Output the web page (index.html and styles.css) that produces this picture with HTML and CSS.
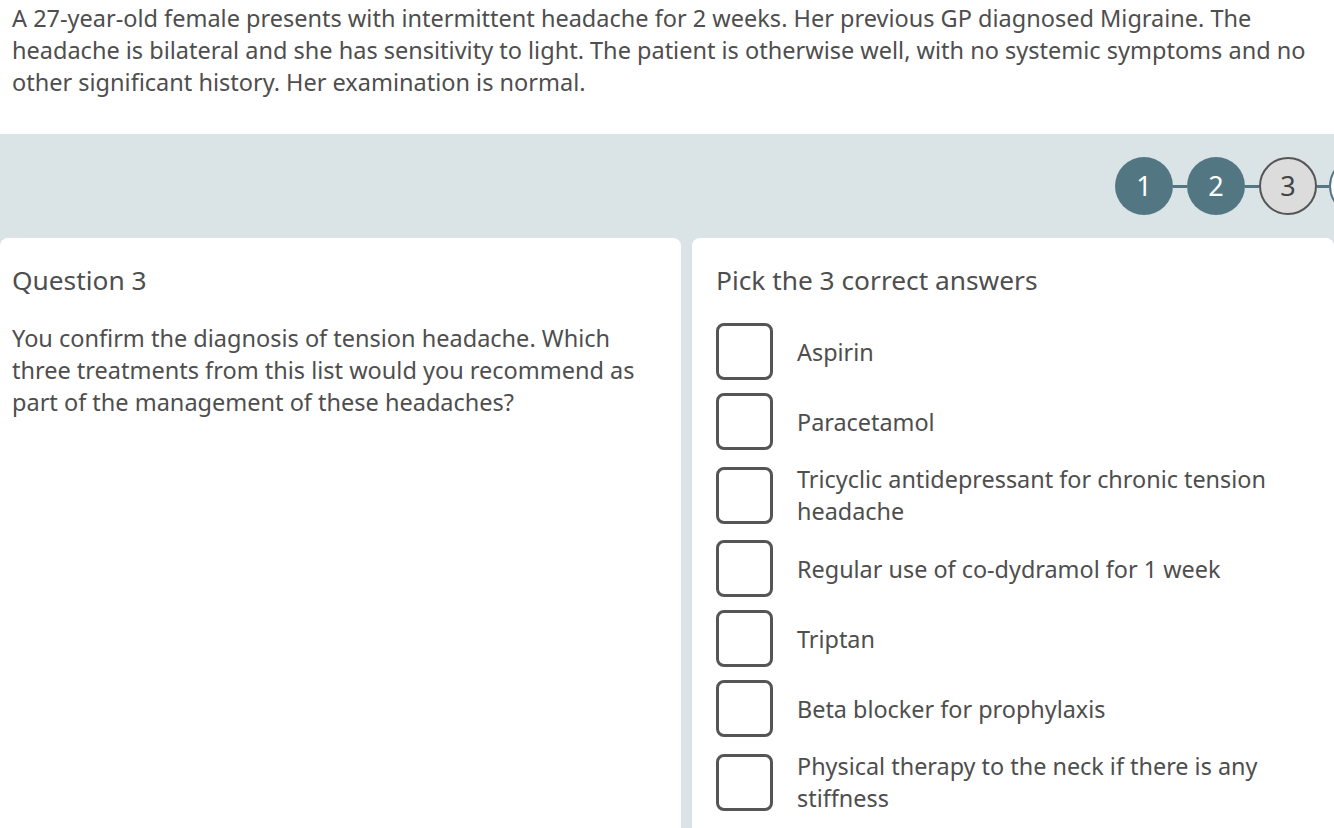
FILE: index.html
```html
<!DOCTYPE html>
<html lang="en">
<head>
<meta charset="utf-8">
<title>Question 3</title>
<link rel="stylesheet" href="styles.css">
</head>
<body>
<div class="page">
  <p class="scenario">A 27-year-old female presents with intermittent headache for 2 weeks. Her previous GP diagnosed Migraine. The headache is bilateral and she has sensitivity to light. The patient is otherwise well, with no systemic symptoms and no other significant history. Her examination is normal.</p>

  <div class="band">
    <div class="stepper">
      <span class="step done">1</span>
      <span class="link"></span>
      <span class="step done">2</span>
      <span class="link"></span>
      <span class="step current">3</span>
      <span class="link short"></span>
      <span class="step todo" aria-label="Step 4"></span>
    </div>
  </div>

  <div class="panels">
    <section class="panel left">
      <h2 class="title">Question 3</h2>
      <p class="question">You confirm the diagnosis of tension headache. Which three treatments from this list would you recommend as part of the management of these headaches?</p>
    </section>
    <section class="panel right">
      <h2 class="title">Pick the 3 correct answers</h2>
      <ul class="options">
        <li class="option"><span class="box"></span><span class="label">Aspirin</span></li>
        <li class="option"><span class="box"></span><span class="label">Paracetamol</span></li>
        <li class="option"><span class="box"></span><span class="label">Tricyclic antidepressant for chronic tension headache</span></li>
        <li class="option"><span class="box"></span><span class="label">Regular use of co-dydramol for 1 week</span></li>
        <li class="option"><span class="box"></span><span class="label">Triptan</span></li>
        <li class="option"><span class="box"></span><span class="label">Beta blocker for prophylaxis</span></li>
        <li class="option"><span class="box"></span><span class="label">Physical therapy to the neck if there is any stiffness</span></li>
      </ul>
    </section>
  </div>
</div>
</body>
</html>
```

FILE: styles.css
```css
* { box-sizing: border-box; }

html, body {
  margin: 0;
  padding: 0;
  background: #ffffff;
}

body {
  font-family: "Noto Sans", "Open Sans", sans-serif;
  font-size: 23.5px;
  line-height: 32px;
  color: #4e4e4e;
  overflow: hidden;
  width: 1334px;
  height: 828px;
}

.page {
  display: flex;
  flex-direction: column;
  height: 828px;
}

.scenario {
  margin: 0;
  padding: 2px 20px 0 12px;
  height: 134px;
  flex-shrink: 0;
}

.band {
  background: #dae3e6;
  height: 104px;
  flex-shrink: 0;
  display: flex;
  align-items: center;
  overflow: hidden;
}

.stepper {
  display: flex;
  align-items: center;
  padding-left: 1115px;
  flex-shrink: 0;
}

.step {
  width: 58px;
  height: 58px;
  border-radius: 50%;
  display: flex;
  align-items: center;
  justify-content: center;
  font-size: 27px;
  flex-shrink: 0;
}

.step.done {
  background: #527783;
  color: #ffffff;
}

.step.current {
  background: #dcdcdc;
  border: 2px solid #555555;
  color: #444444;
}

.step.todo {
  background: #ffffff;
  border: 2px solid #527783;
  color: #527783;
}

.link {
  width: 14px;
  height: 3px;
  background: #527783;
  flex-shrink: 0;
}

.link.short {
  width: 12px;
}

.panels {
  display: flex;
  gap: 11px;
  background: #dae3e6;
  flex: 1;
}

.panel {
  background: #ffffff;
  border-radius: 8px 8px 0 0;
}

.panel.left {
  width: 681px;
  padding: 26px 12px 0 12px;
}

.panel.right {
  flex: 1;
  padding: 26px 20px 0 24px;
}

.title {
  margin: 0;
  font-size: 26.3px;
  font-weight: 400;
  line-height: 32px;
}

.question {
  margin: 26px 0 0 0;
}

.options {
  list-style: none;
  margin: 27px 0 0 0;
  padding: 0;
  display: flex;
  flex-direction: column;
  gap: 13px;
}

.option {
  display: flex;
  align-items: center;
  gap: 24px;
  font-size: 23.4px;
}

.box {
  width: 57px;
  height: 57px;
  border: 3px solid #555555;
  border-radius: 8px;
  flex-shrink: 0;
}

.label {
  line-height: 32px;
}
```
